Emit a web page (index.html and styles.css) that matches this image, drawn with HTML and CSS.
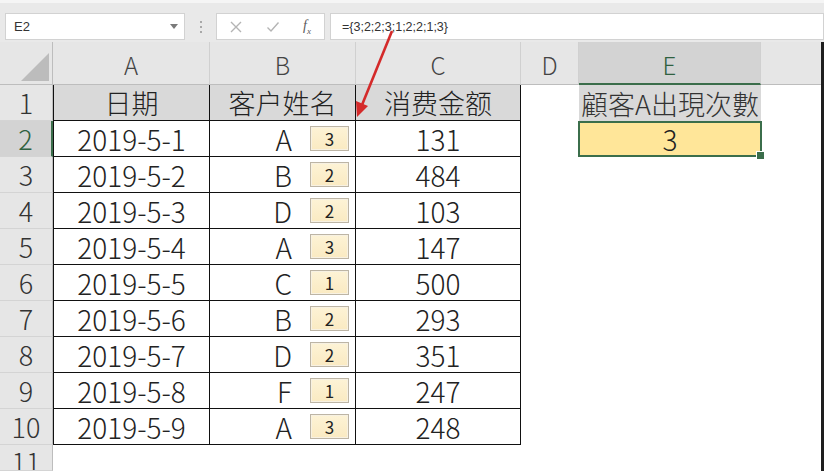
FILE: index.html
```html
<!DOCTYPE html>
<html lang="zh">
<head>
  <meta charset="UTF-8" />
  <title>E2</title>
  <link rel="stylesheet" href="styles.css">
</head>
<body>
<div class="topbar">
  <div class="name-box">
    <span>E2</span>
    <svg class="caret" width="8" height="5" viewBox="0 0 8 5"><polygon points="0,0 8,0 4,5" fill="#7a7a7a"/></svg>
  </div>
  <div class="grip"><i></i><i></i><i></i></div>
  <div class="fn-box">
    <svg width="14" height="14" viewBox="0 0 14 14"><path d="M2 2 L12 12 M12 2 L2 12" stroke="#b4b4b4" stroke-width="1.4" fill="none"/></svg>
    <svg width="14" height="14" viewBox="0 0 14 14"><path d="M1.5 7.5 L5 11 L12.5 2.5" stroke="#b4b4b4" stroke-width="1.4" fill="none"/></svg>
    <span class="fx">f<sub>x</sub></span>
  </div>
  <div class="formula">={3;2;2;3;1;2;2;1;3}</div>
</div>

<div class="sheet">
  <div class="ch corner">
    <svg width="28" height="28" viewBox="0 0 28 28"><polygon points="28,0 28,28 0,28" fill="#bcbcbc"/></svg>
  </div>
  <div class="ch">A</div>
  <div class="ch">B</div>
  <div class="ch">C</div>
  <div class="ch">D</div>
  <div class="ch sel">E</div>
  <div class="ch last"></div>

  <div class="rh">1</div>
  <div class="c t first hd">日期</div>
  <div class="c t hd">客户姓名</div>
  <div class="c t hd">消费金额</div>
  <div class="c"></div>
  <div class="c hd title">顧客A出現次數</div>
  <div class="c"></div>

  <div class="rh sel">2</div>
  <div class="c t first">2019-5-1</div>
  <div class="c t name">A<span class="note">3</span></div>
  <div class="c t">131</div>
  <div class="c"></div>
  <div class="c active">3</div>
  <div class="c"></div>

  <div class="rh">3</div>
  <div class="c t first">2019-5-2</div>
  <div class="c t name">B<span class="note">2</span></div>
  <div class="c t">484</div>
  <div class="c"></div><div class="c"></div><div class="c"></div>

  <div class="rh">4</div>
  <div class="c t first">2019-5-3</div>
  <div class="c t name">D<span class="note">2</span></div>
  <div class="c t">103</div>
  <div class="c"></div><div class="c"></div><div class="c"></div>

  <div class="rh">5</div>
  <div class="c t first">2019-5-4</div>
  <div class="c t name">A<span class="note">3</span></div>
  <div class="c t">147</div>
  <div class="c"></div><div class="c"></div><div class="c"></div>

  <div class="rh">6</div>
  <div class="c t first">2019-5-5</div>
  <div class="c t name">C<span class="note">1</span></div>
  <div class="c t">500</div>
  <div class="c"></div><div class="c"></div><div class="c"></div>

  <div class="rh">7</div>
  <div class="c t first">2019-5-6</div>
  <div class="c t name">B<span class="note">2</span></div>
  <div class="c t">293</div>
  <div class="c"></div><div class="c"></div><div class="c"></div>

  <div class="rh">8</div>
  <div class="c t first">2019-5-7</div>
  <div class="c t name">D<span class="note">2</span></div>
  <div class="c t">351</div>
  <div class="c"></div><div class="c"></div><div class="c"></div>

  <div class="rh">9</div>
  <div class="c t first">2019-5-8</div>
  <div class="c t name">F<span class="note">1</span></div>
  <div class="c t">247</div>
  <div class="c"></div><div class="c"></div><div class="c"></div>

  <div class="rh">10</div>
  <div class="c t first">2019-5-9</div>
  <div class="c t name">A<span class="note">3</span></div>
  <div class="c t">248</div>
  <div class="c"></div><div class="c"></div><div class="c"></div>

  <div class="rh last-row">11</div>
  <div class="c rest"></div>
</div>

<svg class="arrow" width="824" height="471" viewBox="0 0 824 471">
  <line x1="392" y1="31" x2="362" y2="105" stroke="#d42a2a" stroke-width="2.6"/>
  <polygon points="357,117 368,106 356,101" fill="#d42a2a"/>
</svg>
<div class="edge"></div>
</body>
</html>
```

FILE: styles.css
```css
* { box-sizing: border-box; }
html, body { margin:0; padding:0; }
body {
  width:824px; height:471px; overflow:hidden; position:relative; background:#fff;
  font-family:"Noto Sans CJK SC", "Noto Sans", sans-serif; font-weight:300; color:#222;
}

/* formula bar */
.topbar {
  height:42px; background:#e9e9e9; border-top:3px solid #f5f5f5;
  display:flex; align-items:flex-start; padding:10px 0 0 5px;
}
.name-box, .fn-box, .formula {
  height:27px; background:#fff; border:1px solid #d2d2d2;
  display:flex; align-items:center;
}
.name-box {
  width:180px; padding:0 6px 0 8px; justify-content:space-between;
  font-family:"Liberation Sans", sans-serif; font-weight:400; font-size:13px; color:#333;
}
.grip { width:31px; height:27px; display:flex; flex-direction:column; align-items:center; justify-content:center; gap:3px; }
.grip i { width:2px; height:2px; background:#a8a8a8; }
.fn-box { width:109px; padding-left:12px; gap:23px; }
.fx {
  font-family:"Liberation Serif", serif; font-style:italic; font-weight:400;
  font-size:14px; color:#5a5a5a; width:14px;
}
.fx sub { font-size:9px; }
.formula {
  flex:1; margin-left:5px; padding-left:11px;
  font-family:"Liberation Sans", sans-serif; font-weight:400; font-size:12.5px; color:#333;
}

/* sheet grid */
.sheet {
  display:grid;
  grid-template-columns:53px 157px 146px 165px 58px 182px 63px;
  grid-template-rows:43px repeat(10, 36px) 26px;
  line-height:1;
}
.ch {
  background:#e6e6e6; border-right:1px solid #d0d0d0; border-bottom:1px solid #bdbdbd;
  display:flex; align-items:center; justify-content:center;
  font-size:24px; color:#444; padding-top:4px;
}
.ch.corner { align-items:flex-end; justify-content:flex-end; padding:0 3px 3px 0; border-right:1px solid #bdbdbd; }
.ch.sel { background:#d3d3d3; color:#2f6140; border-bottom:2px solid #3b6e4b; }
.ch.last { border-right:none; }
.rh {
  background:#e6e6e6; border-right:1px solid #bdbdbd; border-bottom:1px solid #d4d4d4;
  display:flex; align-items:center; justify-content:center;
  font-size:27px; color:#333;
}
.rh.sel { background:#d3d3d3; color:#2f6140; border-right:2px solid #3b6e4b; }
.rh.last-row { align-items:flex-start; padding-top:3px; overflow:hidden; }
.c {
  display:flex; align-items:center; justify-content:center;
  font-size:28px; white-space:nowrap;
}
.c.t { border-right:1px solid #111; border-bottom:1px solid #111; }
.c.first { border-left:1px solid #111; }
.c.hd { background:#d9d9d9; font-size:27px; }
.c.title {
  font-family:"Noto Sans CJK TC", serif; font-size:27px; color:#333;
  overflow:visible;
}
.c.name { justify-content:flex-end; padding-right:6px; }
.note {
  width:39px; height:25px; margin-left:18px;
  background:linear-gradient(#fdf3d6, #faeac2); border:1px solid #bdb5a5;
  box-shadow:inset 0 0 0 1px #f7f1e2;
  display:flex; align-items:center; justify-content:center;
  font-size:17px; font-weight:400; color:#222;
}
.c.active {
  position:relative; background:#ffe699; border:2px solid #3b6e4b;
  margin:0 -1px 0 -1px;
}
.c.active::after {
  content:""; position:absolute; right:-5px; bottom:-5px;
  width:7px; height:7px; background:#3b6e4b; border:1px solid #fff;
}
.c.rest { grid-column:span 6; }

/* overlay */
.arrow { position:absolute; top:0; left:0; pointer-events:none; }
.edge { position:absolute; top:42px; right:0; width:3px; bottom:0; background:#1e1e1e; }
```
